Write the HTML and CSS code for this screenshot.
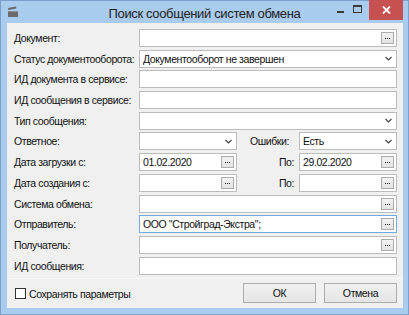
FILE: index.html
```html
<!DOCTYPE html>
<html lang="ru">
<head>
<meta charset="utf-8">
<title>Поиск сообщений систем обмена</title>
<link rel="stylesheet" href="styles.css">
</head>
<body>
<div class="window">
  <div class="titlebar">
    <svg class="app-icon" width="12" height="12" viewBox="0 0 12 12">
      <path d="M1 2 L9 0.5 L9.4 2.4 L1.4 3.9 Z" fill="#6b6b6b"/>
      <rect x="1" y="5" width="10" height="6" fill="#6b6b6b"/>
      <rect x="1" y="5" width="10" height="1" fill="#8a8a8a"/>
    </svg>
    <div class="title">Поиск сообщений систем обмена</div>
    <div class="controls">
      <span class="ctl min"><i></i></span>
      <span class="ctl max"><i></i></span>
      <span class="ctl close">
        <svg width="9" height="8" viewBox="0 0 9 8"><path d="M1 0.5 L8 7.5 M8 0.5 L1 7.5" stroke="#fff" stroke-width="1.8"/></svg>
      </span>
    </div>
  </div>
  <div class="client">
    <div class="form">
      <div class="lbl">Документ:</div>
      <div class="field"><span class="val"></span><span class="dots"><i></i><i></i><i></i></span></div>

      <div class="lbl">Статус документооборота:</div>
      <div class="field"><span class="val">Документооборот не завершен</span><span class="chev"><svg width="7" height="5" viewBox="0 0 7 5"><path d="M0.5 1 L3.5 4 L6.5 1" fill="none" stroke="#444" stroke-width="1.2"/></svg></span></div>

      <div class="lbl">ИД документа в сервисе:</div>
      <div class="field"><span class="val"></span></div>

      <div class="lbl">ИД сообщения в сервисе:</div>
      <div class="field"><span class="val"></span></div>

      <div class="lbl">Тип сообщения:</div>
      <div class="field"><span class="val"></span><span class="chev"><svg width="7" height="5" viewBox="0 0 7 5"><path d="M0.5 1 L3.5 4 L6.5 1" fill="none" stroke="#444" stroke-width="1.2"/></svg></span></div>

      <div class="lbl">Ответное:</div>
      <div class="split">
        <div class="field"><span class="val"></span><span class="chev"><svg width="7" height="5" viewBox="0 0 7 5"><path d="M0.5 1 L3.5 4 L6.5 1" fill="none" stroke="#444" stroke-width="1.2"/></svg></span></div>
        <div class="mid left">Ошибки:</div>
        <div class="field"><span class="val">Есть</span><span class="chev"><svg width="7" height="5" viewBox="0 0 7 5"><path d="M0.5 1 L3.5 4 L6.5 1" fill="none" stroke="#444" stroke-width="1.2"/></svg></span></div>
      </div>

      <div class="lbl">Дата загрузки с:</div>
      <div class="split">
        <div class="field"><span class="val">01.02.2020</span><span class="dots"><i></i><i></i><i></i></span></div>
        <div class="mid right">По:</div>
        <div class="field"><span class="val">29.02.2020</span><span class="dots"><i></i><i></i><i></i></span></div>
      </div>

      <div class="lbl">Дата создания с:</div>
      <div class="split">
        <div class="field"><span class="val"></span><span class="dots"><i></i><i></i><i></i></span></div>
        <div class="mid right">По:</div>
        <div class="field"><span class="val"></span><span class="dots"><i></i><i></i><i></i></span></div>
      </div>

      <div class="lbl">Система обмена:</div>
      <div class="field"><span class="val"></span><span class="dots"><i></i><i></i><i></i></span></div>

      <div class="lbl">Отправитель:</div>
      <div class="field focus"><span class="val">ООО "Стройград-Экстра";</span><span class="dots"><i></i><i></i><i></i></span></div>

      <div class="lbl">Получатель:</div>
      <div class="field"><span class="val"></span><span class="dots"><i></i><i></i><i></i></span></div>

      <div class="lbl">ИД сообщения:</div>
      <div class="field"><span class="val"></span></div>
    </div>
    <div class="footer">
      <div class="check"><span class="box"></span><span>Сохранять параметры</span></div>
      <div class="buttons">
        <div class="btn">ОК</div>
        <div class="btn">Отмена</div>
      </div>
    </div>
  </div>
</div>
</body>
</html>
```

FILE: styles.css
```css
html, body {
  margin: 0;
  padding: 0;
}
body {
  width: 409px;
  height: 315px;
  overflow: hidden;
  font-family: "Liberation Sans", Arial, sans-serif;
  font-size: 10.5px;
  letter-spacing: -0.4px;
  color: #111;
}
.window {
  box-sizing: border-box;
  width: 409px;
  height: 315px;
  background: #a9cbee;
  border: 1px solid #7d9fca;
  display: flex;
  flex-direction: column;
}
.titlebar {
  height: 22px;
  display: grid;
  grid-template-columns: 1fr auto 1fr;
  align-items: start;
}
.app-icon {
  margin: 5px 0 0 6px;
}
.title {
  font-size: 13px;
  color: #222;
  line-height: 22px;
  padding-top: 2px;
  letter-spacing: -0.35px;
}
.controls {
  justify-self: end;
  display: flex;
  align-items: flex-start;
  margin-right: 5px;
  margin-top: -1px;
}
.ctl {
  display: flex;
  align-items: center;
  justify-content: center;
  height: 20px;
}
.min {
  width: 18px;
}
.min i {
  display: block;
  width: 7px;
  height: 2px;
  background: #3a3a3a;
  margin-top: 4px;
}
.max {
  width: 16px;
  margin-right: 4px;
}
.max i {
  display: block;
  box-sizing: border-box;
  width: 9px;
  height: 8px;
  border: 1px solid #3a3a3a;
  border-top-width: 2px;
  margin-top: -3px;
}
.close {
  width: 34px;
  background: #c75050;
}
.client {
  flex: 1;
  margin: 0 5px 6px 6px;
  background: #f0f0f0;
  display: flex;
  flex-direction: column;
}
.form {
  display: grid;
  grid-template-columns: 125px 1fr;
  grid-auto-rows: 18px;
  row-gap: 2.7px;
  padding: 6px 6px 0 7px;
}
.lbl {
  display: flex;
  align-items: center;
  white-space: nowrap;
}
.field {
  box-sizing: border-box;
  height: 18px;
  background: #fff;
  border: 1px solid #bcbcbc;
  display: flex;
  align-items: center;
  padding: 0 2px 0 3px;
  min-width: 0;
}
.field.focus {
  border-color: #72aae0;
}
.val {
  flex: 1;
  white-space: nowrap;
  overflow: hidden;
  line-height: 16px;
}
.dots {
  box-sizing: border-box;
  width: 13px;
  height: 12px;
  background: linear-gradient(#f2f2f2, #e2e2e2);
  border: 1px solid #acacac;
  display: flex;
  align-items: center;
  justify-content: center;
  gap: 1px;
  padding-top: 1px;
}
.dots i {
  display: block;
  width: 1px;
  height: 1px;
  background: #222;
}
.chev {
  width: 9px;
  display: flex;
  align-items: center;
  justify-content: center;
  margin-right: 1px;
}
.split {
  display: grid;
  grid-template-columns: 98px 1fr 98px;
}
.mid {
  display: flex;
  align-items: center;
  white-space: nowrap;
}
.mid.left {
  padding-left: 13px;
}
.mid.right {
  justify-content: flex-end;
  padding-right: 5px;
}
.footer {
  margin-top: auto;
  height: 29px;
  border-top: 1px solid #f7f7f7;
  display: flex;
  align-items: center;
  justify-content: space-between;
  padding: 0 6px 0 8px;
}
.check {
  display: flex;
  align-items: center;
  gap: 3px;
}
.box {
  box-sizing: border-box;
  width: 11px;
  height: 11px;
  background: #fff;
  border: 1px solid #333;
}
.buttons {
  display: flex;
  gap: 8px;
  padding-bottom: 1px;
}
.btn {
  box-sizing: border-box;
  width: 73px;
  height: 20px;
  border: 1px solid #acacac;
  background: linear-gradient(#f0f0f0, #e5e5e5);
  display: flex;
  align-items: center;
  justify-content: center;
}
```
